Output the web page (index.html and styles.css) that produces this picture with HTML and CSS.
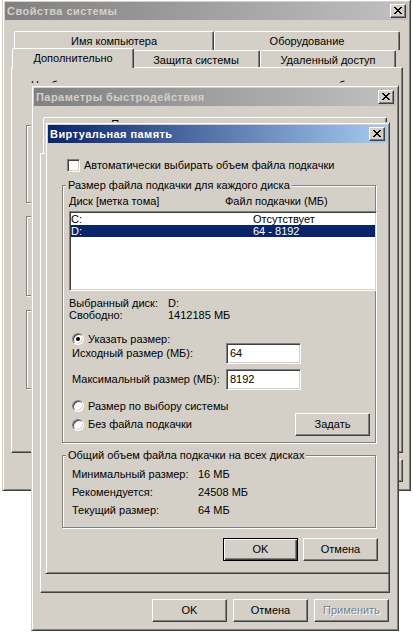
FILE: index.html
```html
<!DOCTYPE html>
<html lang="ru">
<head>
<meta charset="utf-8">
<title>Виртуальная память</title>
<link rel="stylesheet" href="styles.css">
</head>
<body>
<div class="desktop">

  <section class="win win-sys">
    <header class="titlebar inactive">
      <span class="title">Свойства системы</span>
      <span class="close"><svg width="8" height="7" viewBox="0 0 8 7"><path d="M0 0h2v1H0zM6 0h2v1H6zM1 1h2v1H1zM5 1h2v1H5zM2 2h4v1H2zM3 3h2v1H3zM2 4h4v1H2zM1 5h2v1H1zM5 5h2v1H5zM0 6h2v1H0zM6 6h2v1H6z"/></svg></span>
    </header>
    <div class="win-body">
      <div class="tabs sys-tabs">
        <div class="tabrow back">
          <div class="tab t-name">Имя компьютера</div>
          <div class="tab t-hw">Оборудование</div>
        </div>
        <div class="tabrow front">
          <div class="tab t-adv selected">Дополнительно</div>
          <div class="tab t-prot">Защита системы</div>
          <div class="tab t-remote">Удаленный доступ</div>
        </div>
      </div>
      <div class="tabpanel sys-panel">
        <div class="note"><span>Необходимо иметь права администратора для выполнения большинства перечисленных изменений.</span></div>
        <div class="group sys-g1"></div>
        <div class="group sys-g2"></div>
        <div class="group sys-g3"></div>
      </div>
      <div class="buttons sys-buttons">
        <div class="btn"></div>
        <div class="btn"></div>
        <div class="btn"></div>
      </div>
    </div>
  </section>

  <section class="win win-perf">
    <header class="titlebar inactive">
      <span class="title">Параметры быстродействия</span>
      <span class="close"><svg width="8" height="7" viewBox="0 0 8 7"><path d="M0 0h2v1H0zM6 0h2v1H6zM1 1h2v1H1zM5 1h2v1H5zM2 2h4v1H2zM3 3h2v1H3zM2 4h4v1H2zM1 5h2v1H1zM5 5h2v1H5zM0 6h2v1H0zM6 6h2v1H6z"/></svg></span>
    </header>
    <div class="win-body">
      <div class="tabs perf-tabs">
        <div class="tabrow back">
          <div class="tab t-dep"><span class="tab-clip"><span>Предотвращение выполнения данных</span></span></div>
        </div>
        <div class="tabrow front">
          <div class="tab t-vis"></div>
          <div class="tab t-adv2 selected"></div>
        </div>
      </div>
      <div class="tabpanel perf-panel"></div>
      <div class="buttons perf-buttons">
        <div class="btn">OK</div>
        <div class="btn">Отмена</div>
        <div class="btn disabled">Применить</div>
      </div>
    </div>
  </section>

  <section class="win win-vm">
    <header class="titlebar active">
      <span class="title">Виртуальная память</span>
      <span class="close"><svg width="8" height="7" viewBox="0 0 8 7"><path d="M0 0h2v1H0zM6 0h2v1H6zM1 1h2v1H1zM5 1h2v1H5zM2 2h4v1H2zM3 3h2v1H3zM2 4h4v1H2zM1 5h2v1H1zM5 5h2v1H5zM0 6h2v1H0zM6 6h2v1H6z"/></svg></span>
    </header>
    <div class="win-body vm-body">
      <label class="check-row">
        <span class="checkbox"></span>
        <span>Автоматически выбирать объем файла подкачки</span>
      </label>

      <div class="group vm-g1">
        <span class="legend">Размер файла подкачки для каждого диска</span>
        <div class="list-head">
          <span>Диск [метка тома]</span>
          <span>Файл подкачки (МБ)</span>
        </div>
        <div class="listbox">
          <div class="item"><span>C:</span><span>Отсутствует</span></div>
          <div class="item sel"><span>D:</span><span>64 - 8192</span></div>
        </div>
        <div class="info first"><span>Выбранный диск:</span><span>D:</span></div>
        <div class="info"><span>Свободно:</span><span>1412185 МБ</span></div>

        <div class="radio-row r-custom"><span class="radio on"></span><span>Указать размер:</span></div>
        <div class="edit-row e-init"><span>Исходный размер (МБ):</span><span class="edit">64</span></div>
        <div class="edit-row e-max"><span>Максимальный размер (МБ):</span><span class="edit">8192</span></div>
        <div class="radio-row r-system"><span class="radio"></span><span>Размер по выбору системы</span></div>
        <div class="last-row">
          <div class="radio-row"><span class="radio"></span><span>Без файла подкачки</span></div>
          <div class="btn set-btn">Задать</div>
        </div>
      </div>

      <div class="group vm-g2">
        <span class="legend">Общий объем файла подкачки на всех дисках</span>
        <div class="totals">
          <span>Минимальный размер:</span><span>16 МБ</span>
          <span>Рекомендуется:</span><span>24508 МБ</span>
          <span>Текущий размер:</span><span>64 МБ</span>
        </div>
      </div>

      <div class="buttons vm-buttons">
        <div class="btn default">OK</div>
        <div class="btn">Отмена</div>
      </div>
    </div>
  </section>

</div>
</body>
</html>
```

FILE: styles.css
```css
* { box-sizing: border-box; }
html, body { margin: 0; padding: 0; }
body {
  background: #fff;
  font-family: "Liberation Sans", Arial, sans-serif;
  font-size: 11px;
  line-height: 13px;
  color: #000;
}
.desktop {
  position: relative;
  width: 413px;
  height: 633px;
  overflow: hidden;
  background: #fff;
}

/* windows on the desktop */
.win {
  position: absolute;
  display: flex;
  flex-direction: column;
  background: #d4d0c8;
  border: 1px solid;
  border-color: #d4d0c8 #404040 #404040 #d4d0c8;
  box-shadow: inset 1px 1px #fff, inset -1px -1px #808080;
  padding: 2px;
}
.win-sys  { left: 2px;  top: -1px; width: 409px; height: 492px; z-index: 1; }
.win-perf { left: 31px; top: 85px; width: 368px; height: 546px; z-index: 2; }
.win-vm   { left: 45px; top: 122px; width: 345px; height: 452px; z-index: 3; }

.titlebar {
  height: 18px;
  flex: none;
  display: flex;
  align-items: center;
  padding: 0 2px 0 2px;
  font-weight: bold;
  letter-spacing: 0.45px;
  white-space: nowrap;
}
.titlebar.inactive { background: linear-gradient(to right, #808080, #c0c0c0); color: #d4d0c8; }
.titlebar.active { background: linear-gradient(to right, #0a246a, #a6caf0); color: #fff; }
.title { flex: 1; overflow: hidden; }
.close {
  width: 16px;
  height: 14px;
  flex: none;
  display: flex;
  align-items: center;
  justify-content: center;
  background: #d4d0c8;
  border: 1px solid;
  border-color: #fff #404040 #404040 #fff;
  box-shadow: inset -1px -1px #808080;
  padding: 0 1px 1px 0;
}
.close svg { display: block; fill: #000; shape-rendering: crispEdges; }

.win-body {
  flex: 1;
  display: flex;
  flex-direction: column;
  min-height: 0;
}

/* tabs */
.tabs { display: flex; flex-direction: column; flex: none; margin-top: 11px; }
.sys-tabs { margin-left: 6px; margin-right: 5px; padding: 0 3px; }
.perf-tabs { margin-left: 6px; margin-right: 6px; padding: 0 3px 0 3px; }
.tabrow { display: flex; }
.tabrow.back { height: 19px; }
.tabrow.front { height: 17px; align-items: flex-end; }
.tab {
  height: 19px;
  background: #d4d0c8;
  border: 1px solid;
  border-bottom: none;
  border-color: #fff #404040 transparent #fff;
  box-shadow: inset -1px 0 #808080;
  border-radius: 2px 2px 0 0;
  display: flex;
  align-items: center;
  justify-content: center;
  white-space: nowrap;
  overflow: hidden;
}
.tabrow.back .tab { padding-top: 1px; }
.tabrow.front .tab { height: 17px; padding-top: 2px; }
.tabrow.front .tab.selected {
  height: 20px;
  margin: 0 -2px -1px -2px;
  padding: 0 0 1px 0;
  position: relative;
  z-index: 2;
}
.t-name { width: 200px; }
.t-hw { width: 186px; }
.t-adv { width: 122px; }
.t-prot { width: 128px; }
.t-remote { width: 136px; }
.t-dep { flex: 1; align-items: flex-start; }
.tabrow.back .t-dep { padding-top: 0; }
.tab-clip { display: block; height: 4px; overflow: hidden; margin-left: -12px; }
.tab-clip span { display: block; line-height: 13px; }
.t-vis { width: 130px; }
.t-adv2 { width: 110px; }

.tabpanel {
  flex: 1;
  border: 1px solid;
  border-color: #fff #404040 #404040 #fff;
  box-shadow: inset -1px -1px #808080;
  display: flex;
  flex-direction: column;
}
.sys-panel { margin: 0 5px 0 6px; padding: 11px 0 0 19px; }
.perf-panel { margin: 0 6px 0 6px; }

.note {
  margin: 0;
  width: 360px;
  height: 4px;
  overflow: hidden;
  white-space: nowrap;
  line-height: 13px;
}
.note span { display: block; }
.sys-g1 { margin: 42px 0 0 -5px; height: 78px; width: 360px; }
.sys-g2 { margin: 13px 0 0 -5px; height: 80px; width: 360px; }
.sys-g3 { margin: 14px 0 0 -5px; height: 79px; width: 360px; }

/* buttons */
.buttons {
  flex: none;
  display: flex;
  justify-content: flex-end;
  gap: 6px;
  height: 23px;
}
.sys-buttons { margin: 6px 5px 6px 0; }
.perf-buttons { margin: 6px 7px 6px 0; }
.btn {
  width: 75px;
  height: 23px;
  background: #d4d0c8;
  border: 1px solid;
  border-color: #fff #404040 #404040 #fff;
  box-shadow: inset -1px -1px #808080;
  display: flex;
  align-items: center;
  justify-content: center;
  white-space: nowrap;
}
.btn.default {
  border-color: #000;
  box-shadow: inset 1px 1px #fff, inset -1px -1px #404040, inset -2px -2px #808080;
}
.btn.disabled { color: #808080; text-shadow: 1px 1px 0 #fff; }

/* group boxes */
.group {
  border: 1px solid #808080;
  box-shadow: inset 1px 1px #fff, 1px 1px #fff;
  display: flex;
  flex-direction: column;
  flex: none;
}
.legend {
  align-self: flex-start;
  margin: -7px 0 0 3px;
  padding: 0 2px;
  height: 13px;
  background: #d4d0c8;
  white-space: nowrap;
}

/* virtual memory dialog */
.vm-body { padding: 16px 11px 10px 14px; }
.check-row {
  display: flex;
  align-items: center;
  gap: 4px;
  height: 13px;
  margin-left: 5px;
}
.checkbox {
  width: 13px;
  height: 13px;
  flex: none;
  background: #fff;
  border: 1px solid;
  border-color: #808080 #fff #fff #808080;
  box-shadow: inset 1px 1px #404040, inset -1px -1px #d4d0c8;
}
.vm-g1 { margin-top: 13px; height: 258px; }
.vm-g2 { margin-top: 12px; height: 73px; }

.list-head {
  display: grid;
  grid-template-columns: 156px 1fr;
  margin: 3px 0 0 6px;
  height: 13px;
}
.listbox {
  margin: 3px -2px 0 6px;
  height: 80px;
  background: #fff;
  border: 1px solid;
  border-color: #808080 #fff #fff #808080;
  box-shadow: inset 1px 1px #404040, inset -1px -1px #d4d0c8;
  padding: 1px;
}
.item {
  display: grid;
  grid-template-columns: 182px 1fr;
  height: 12px;
  line-height: 12px;
}
.item.sel { background: #0a246a; color: #fff; }

.info {
  display: grid;
  grid-template-columns: 99px 1fr;
  margin-left: 6px;
  height: 12px;
  line-height: 12px;
}
.info.first { margin-top: 6px; }

.radio-row {
  display: flex;
  align-items: center;
  gap: 4px;
  height: 12px;
  white-space: nowrap;
}
.vm-g1 > .radio-row { margin-left: 9px; }
.r-custom { margin-top: 12px; }
.r-system { margin-top: 10px; }
.radio {
  width: 12px;
  height: 12px;
  flex: none;
  border-radius: 50%;
  background: #fff;
  border: 1px solid;
  border-color: #808080 #fff #fff #808080;
  box-shadow: inset 1px 1px #404040, inset -1px -1px #d4d0c8;
  display: flex;
  align-items: center;
  justify-content: center;
}
.radio.on::after {
  content: "";
  width: 4px;
  height: 4px;
  border-radius: 50%;
  background: #000;
}

.edit-row {
  display: grid;
  grid-template-columns: 154px 75px;
  align-items: center;
  margin-left: 9px;
  height: 21px;
}
.e-init { margin-top: -2px; }
.e-max { margin-top: 5px; }
.edit {
  height: 21px;
  background: #fff;
  border: 1px solid;
  border-color: #808080 #fff #fff #808080;
  box-shadow: inset 1px 1px #404040, inset -1px -1px #d4d0c8;
  padding: 0 3px;
  line-height: 18px;
}

.last-row {
  display: flex;
  align-items: center;
  justify-content: space-between;
  margin: 1px 5px 0 9px;
  height: 23px;
}

.totals {
  display: grid;
  grid-template-columns: 126px 1fr;
  margin: 3px 0 0 9px;
  line-height: 18px;
}

.vm-buttons { margin: 10px -2px 0 0; gap: 5px; }
```
